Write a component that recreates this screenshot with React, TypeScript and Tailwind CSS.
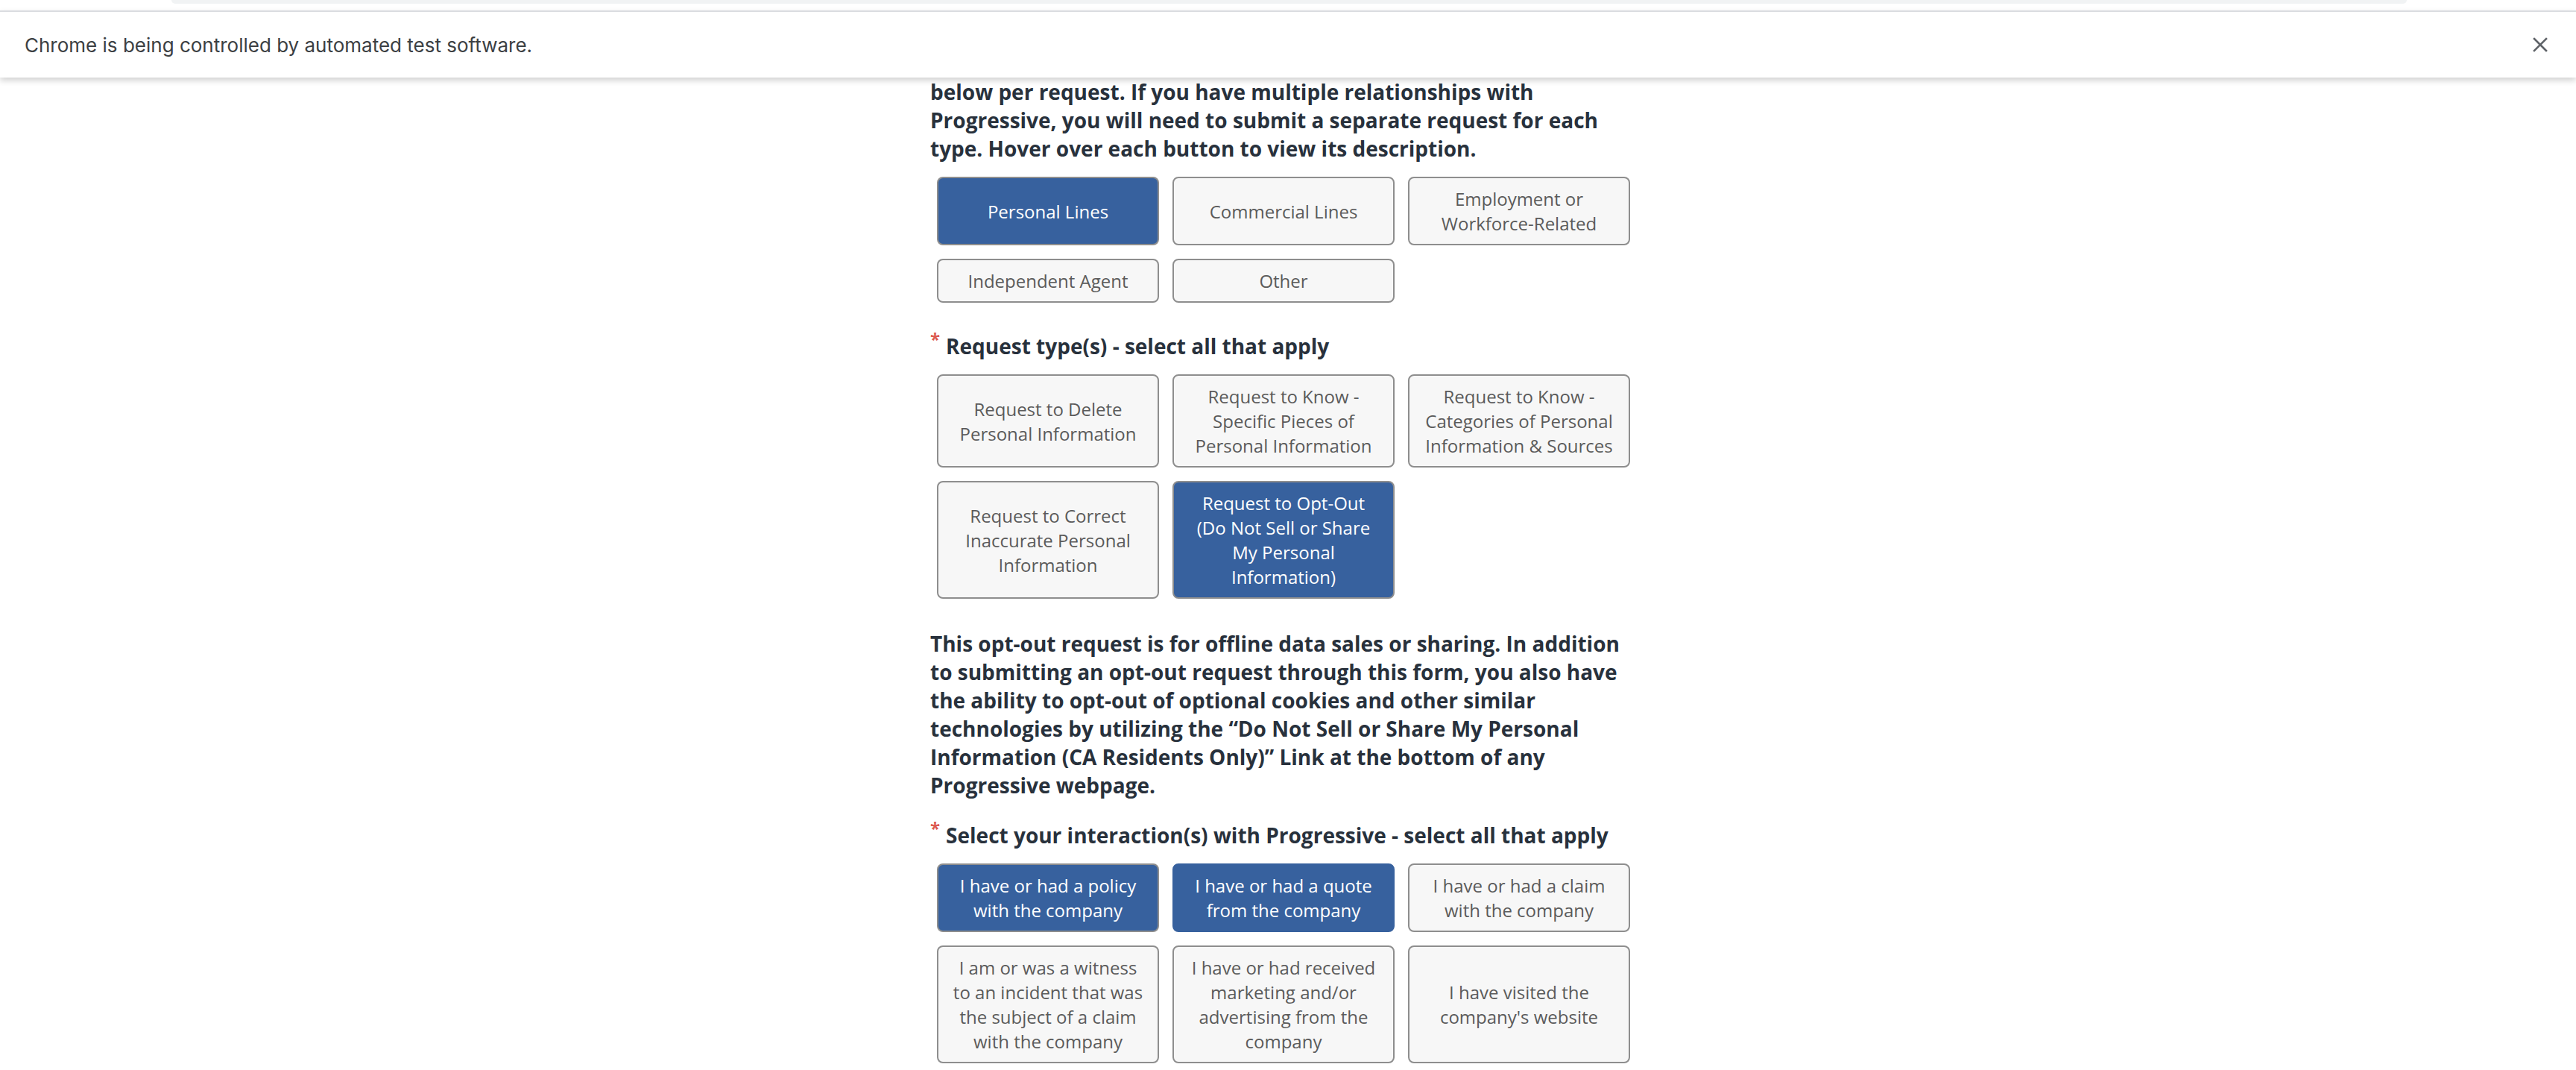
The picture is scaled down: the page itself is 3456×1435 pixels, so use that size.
import React from 'react'

type Opt = { label: string, selected?: boolean, noBorder?: boolean }

const relationships: Opt[] = [
    { label: 'Personal Lines', selected: true },
    { label: 'Commercial Lines' },
    { label: 'Employment or Workforce-Related' },
    { label: 'Independent Agent' },
    { label: 'Other' },
]

const requestTypes: Opt[] = [
    { label: 'Request to Delete Personal Information' },
    { label: 'Request to Know - Specific Pieces of Personal Information' },
    { label: 'Request to Know - Categories of Personal Information & Sources' },
    { label: 'Request to Correct Inaccurate Personal Information' },
    { label: 'Request to Opt-Out (Do Not Sell or Share My Personal Information)', selected: true },
]

const interactions: Opt[] = [
    { label: 'I have or had a policy with the company', selected: true },
    { label: 'I have or had a quote from the company', selected: true, noBorder: true },
    { label: 'I have or had a claim with the company' },
    { label: 'I am or was a witness to an incident that was the subject of a claim with the company' },
    { label: 'I have or had received marketing and/or advertising from the company' },
    { label: "I have visited the company's website" },
]

const OptionButton = ({ label, selected = false, noBorder = false }: Opt) => {
    const cls = selected
        ? noBorder
            ? 'bg-[#37619e] text-white border-[#37619e]'
            : 'bg-[#37619e] text-white border-[#8e8e8e]'
        : 'bg-[#f7f7f7] text-[#5b5b5b] border-[#8e8e8e]'
    return <button
        type="button"
        className={`m-[9px] w-[298px] rounded-[8px] border-2 px-[18px] py-[11px] text-center text-[24px] leading-[33px] flex items-center justify-center ${cls}`}
    >
        {label}
    </button>
}

const OptionGroup = ({ items }: { items: Opt[] }) => {
    return <div className="flex flex-wrap w-[948px]">
        {items.map((o) => <OptionButton key={o.label} {...o} />)}
    </div>
}

const Heading = ({ children, className = '' }: { children: React.ReactNode, className?: string }) => {
    return <h3 className={`text-[28px] leading-[38px] font-bold text-[#28313c] ${className}`}>
        <span className="inline-block align-top text-[#dc5a50] text-[24px] leading-none mt-[-2px] mr-[8px]">*</span>
        {children}
    </h3>
}

export default function App() {
    return (
        <div className="min-h-screen bg-white" style={{ fontFamily: '"Open Sans", "Noto Sans", sans-serif' }}>
            {/* browser chrome strip + automation infobar */}
            <div className="relative z-10 bg-white">
                <div className="h-[14px] pl-[230px] pr-[227px]">
                    <div className="h-[5px] bg-[#f1f3f4] rounded-b-[10px]"></div>
                </div>
                <div className="h-[90px] border-t-2 border-[#dadce0] bg-white shadow-[0_4px_8px_rgba(0,0,0,0.18)] flex items-center justify-between pl-[33px] pr-[38px]">
                    <span className="text-[26px] text-[#3c4043]" style={{ fontFamily: 'Inter, Roboto, "Liberation Sans", sans-serif' }}>
                        Chrome is being controlled by automated test software.
                    </span>
                    <svg width="20" height="20" viewBox="0 0 20 20" className="text-[#5f6368]">
                        <path d="M2 2 L18 18 M18 2 L2 18" stroke="currentColor" strokeWidth="2.6" strokeLinecap="square" />
                    </svg>
                </div>
            </div>

            <div className="w-[960px] mx-auto pr-[12px]">
                <p className="text-[28px] leading-[38px] font-bold text-[#28313c]">
                    below per request. If you have multiple relationships with Progressive, you will need to submit a separate request for each type. Hover over each button to view its description.
                </p>

                <div className="mt-[10px]">
                    <OptionGroup items={relationships} />
                </div>

                <Heading className="mt-[30px]">Request type(s) - select all that apply</Heading>
                <div className="mt-[10px]">
                    <OptionGroup items={requestTypes} />
                </div>

                <p className="mt-[32px] text-[28px] leading-[38px] font-bold text-[#28313c]">
                    This opt-out request is for offline data sales or sharing. In addition to submitting an opt-out request through this form, you also have the ability to opt-out of optional cookies and other similar technologies by utilizing the “Do Not Sell or Share My Personal Information (CA Residents Only)” Link at the bottom of any Progressive webpage.
                </p>

                <Heading className="mt-[29px]">Select your interaction(s) with Progressive - select all that apply</Heading>
                <div className="mt-[10px]">
                    <OptionGroup items={interactions} />
                </div>
            </div>
        </div>
    )
}
